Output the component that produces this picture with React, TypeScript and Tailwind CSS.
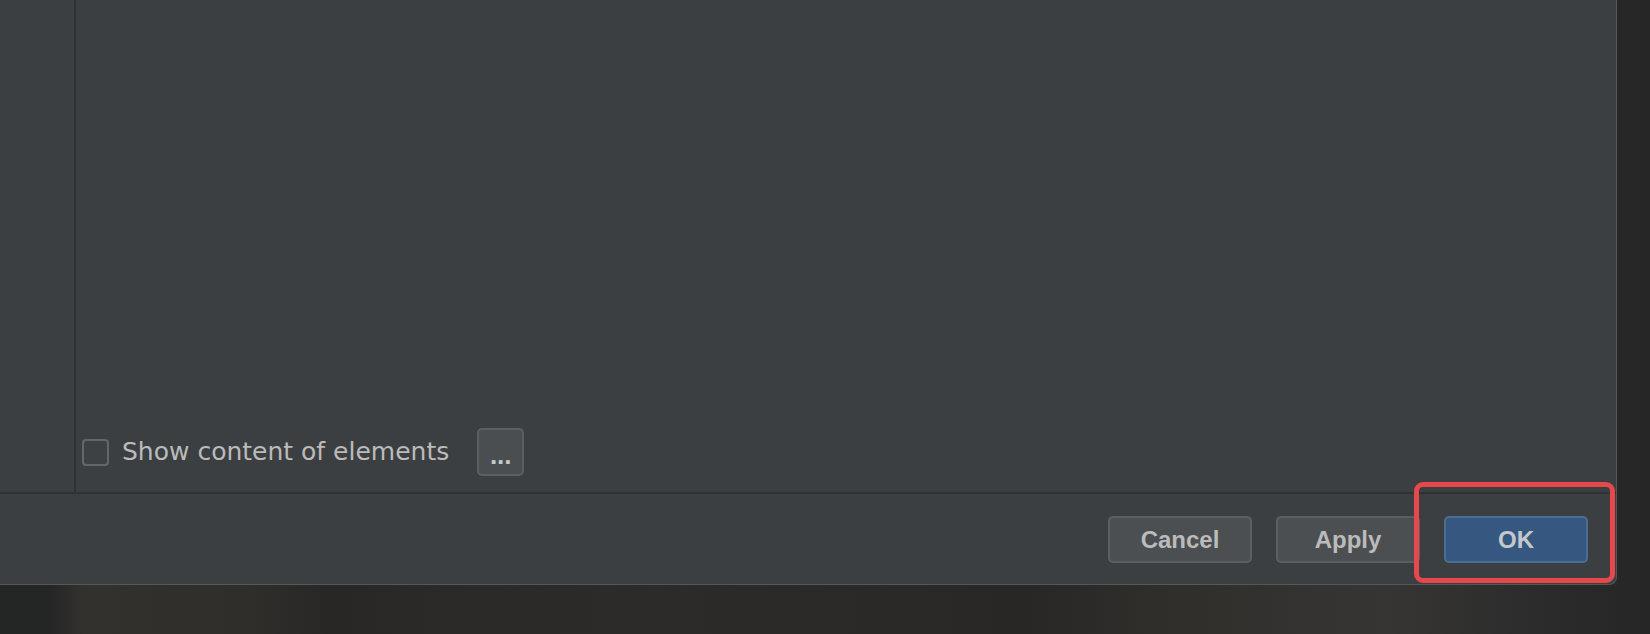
import React from 'react';

const BTN = 'h-[47px] w-[144px] rounded-[5px] border-2 text-[24px] font-bold flex items-center justify-center';

function DialogButton({ label, primary }: { label: string; primary?: boolean }) {
  return (
    <div
      className={`${BTN} ${primary ? 'bg-[#365880] border-[#4a6e91] text-[#c4c8cc]' : 'bg-[#4b4f51] border-[#5c5f61] text-[#bbbbbb]'}`}
      style={{ fontFamily: '"Liberation Sans", Arial, sans-serif' }}
    >
      {label}
    </div>
  );
}

export default function App() {
  return (
    <div
      className="relative w-[1650px] h-[634px] overflow-hidden"
      style={{ background: 'linear-gradient(90deg, #242525 0%, #242525 3%, #33312e 5%, #2f2e2b 15%, #282725 20%, #2c2a28 27%, #2d2b29 40%, #2b2927 55%, #282726 62%, #302e2b 70%, #363533 84%, #2a2a2b 95%, #262626 100%)' }}
    >
      <div className="w-[1617px] h-[585px] bg-[#3c3f41] border-r border-b border-[#55585a] rounded-br-[8px] flex flex-col">
        {/* main area */}
        <div className="h-[492px] flex">
          <div className="w-[74px]" />
          <div className="w-[2px] bg-[#2f3133]" />
          <div className="flex-1 flex flex-col justify-end pb-[16px]">
            <div className="flex items-center pl-[6px]">
              <div className="w-[27px] h-[27px] rounded-[4px] border-2 border-[#646668] bg-[#3e4143]" />
              <span
                className="ml-[13px] text-[25px] text-[#bbbbbb]"
                style={{ fontFamily: '"DejaVu Sans", "Noto Sans", sans-serif' }}
              >
                Show content of elements
              </span>
              <div
                className="ml-[28px] w-[47px] h-[48px] rounded-[5px] border-2 border-[#5c5f61] bg-[#4a4e50] text-[#c8c8c8] text-[26px] font-bold flex items-end justify-center pb-[6px] leading-none"
                style={{ fontFamily: '"Liberation Sans", Arial, sans-serif' }}
              >
                ...
              </div>
            </div>
          </div>
        </div>
        <div className="h-[2px] bg-[#2f3133]" />
        {/* footer */}
        <div className="flex-1 flex justify-end items-start pt-[22px] pr-[28px] gap-[24px]">
          <DialogButton label="Cancel" />
          <DialogButton label="Apply" />
          <DialogButton label="OK" primary />
        </div>
      </div>

      {/* highlight around OK */}
      <div className="absolute left-[1414px] top-[482px] w-[201px] h-[101px] rounded-[9px] border-[5px] border-[#e6484c]" />
    </div>
  );
}
